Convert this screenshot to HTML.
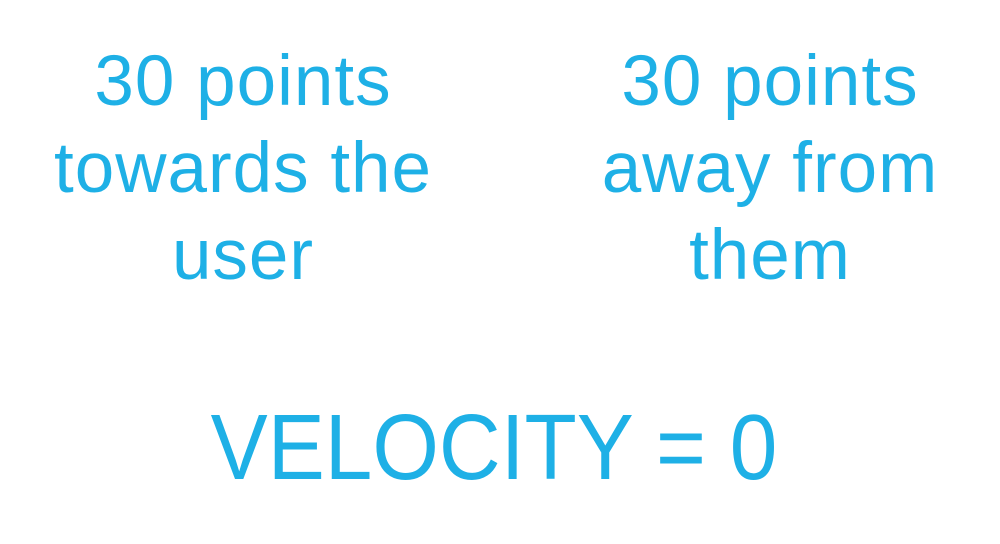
<!DOCTYPE html>
<html><head><meta charset="utf-8"><style>
html,body{margin:0;padding:0;background:#fff;}
body{width:1000px;height:544px;position:relative;overflow:hidden;font-family:"Liberation Sans",sans-serif;color:#1eb0e6;}
.blk{position:absolute;top:38px;width:480px;text-align:center;font-size:71px;line-height:87px;letter-spacing:1px;}
.v{position:absolute;left:0;width:1000px;top:397px;text-align:center;font-size:93px;line-height:100px;}
.v span{display:inline-block;transform:scaleX(0.92);transform-origin:center;margin-left:-12px;}
</style></head><body>
<div class="blk" style="left:3px">30 points<br>towards the<br>user</div>
<div class="blk" style="left:530px">30 points<br>away from<br>them</div>
<div class="v"><span>VELOCITY = 0</span></div>
</body></html>
